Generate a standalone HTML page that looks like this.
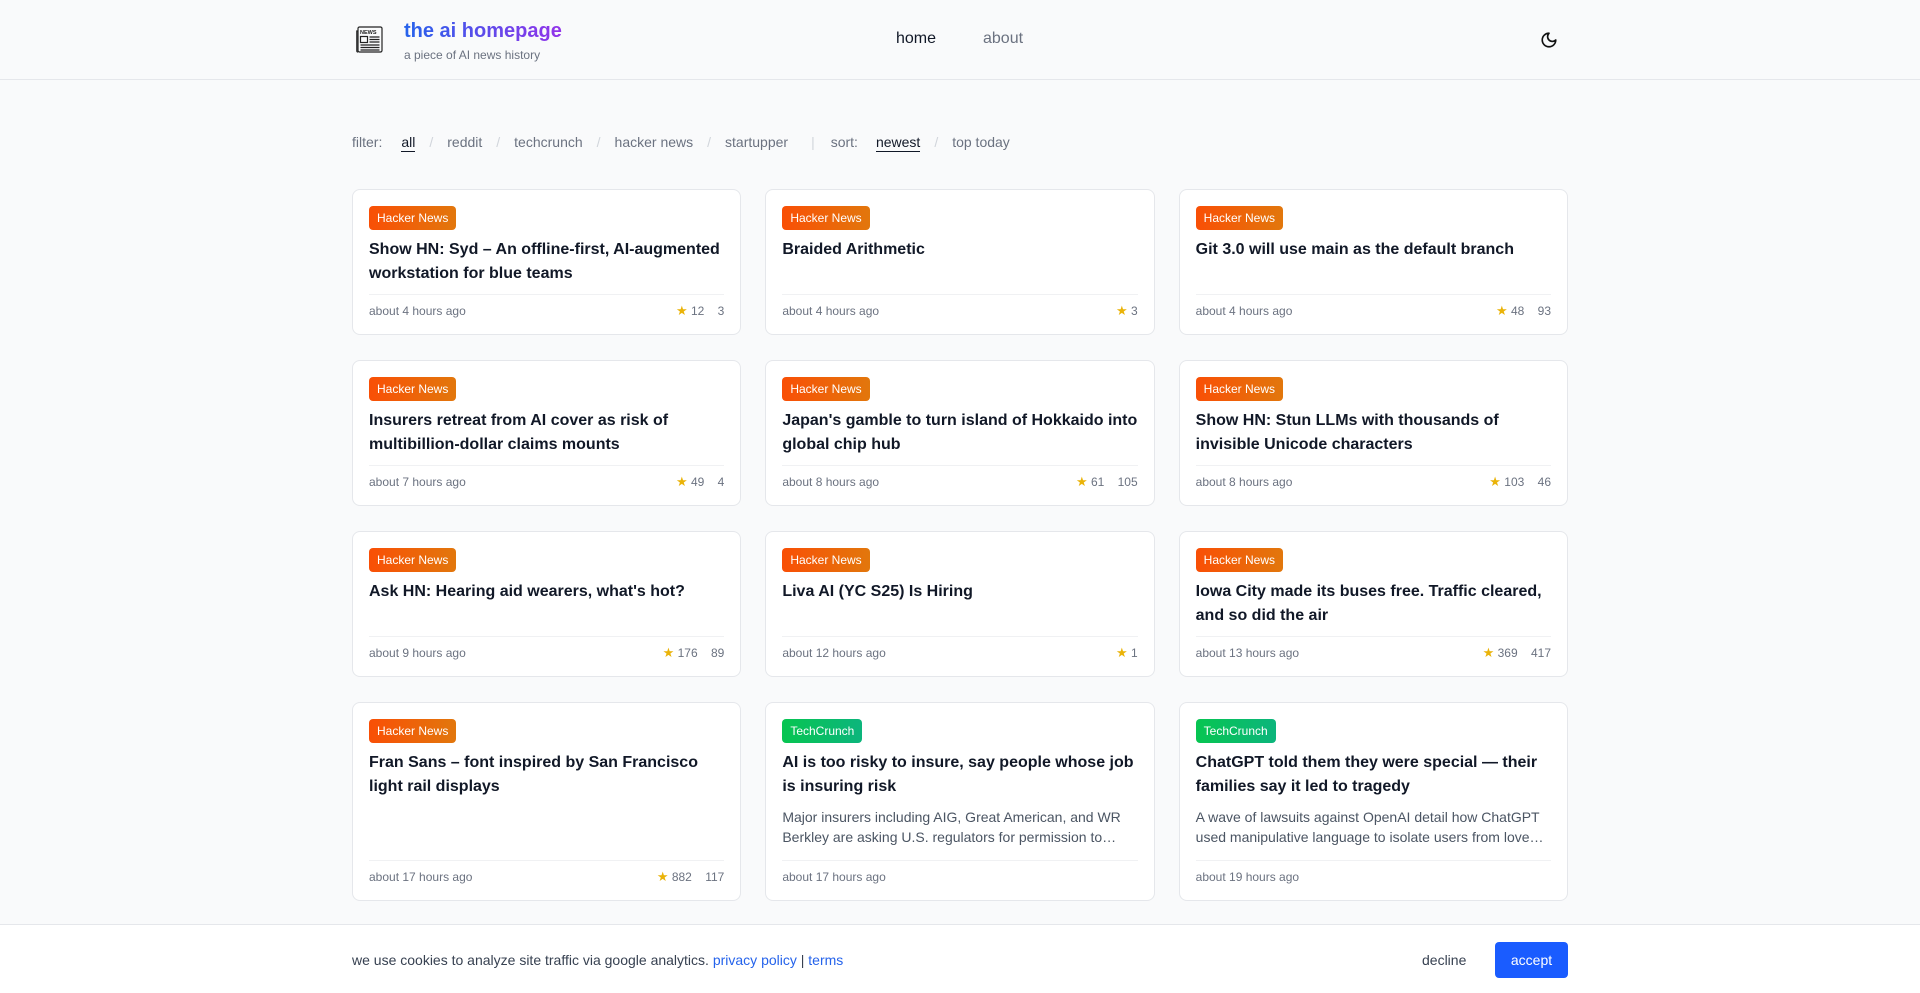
<!DOCTYPE html>
<html><head><meta charset="utf-8"><style>
*{box-sizing:border-box;margin:0;padding:0}
body{width:1920px;height:993px;overflow:hidden;background:#f9fafb;font-family:"Liberation Sans",sans-serif;color:#111827;position:relative}
header{height:80px;border-bottom:1px solid #e5e7eb;position:relative}
.logo{position:absolute;left:356px;top:26px}
.brand{position:absolute;left:404px;top:19px;font-size:20px;font-weight:bold;background:linear-gradient(90deg,#2563eb,#9333ea);-webkit-background-clip:text;background-clip:text;color:transparent;line-height:24px}
.sub{position:absolute;left:404px;top:48px;font-size:12px;color:#6b7280}
.nav{position:absolute;top:30px;font-size:16px}
.moon{position:absolute;left:1540px;top:31px}
.filters{position:absolute;top:134px;left:352px;font-size:14px;color:#6b7280;display:flex;white-space:nowrap}
.sel{color:#111827;border-bottom:1.5px solid #111827;padding-bottom:1px}
.filters .sep{color:#d1d5db;margin:0 14px}
.grid{position:absolute;top:189px;left:352px;width:1216px;display:grid;grid-template-columns:repeat(3,1fr);column-gap:24px;row-gap:25px}
.card{background:#fff;border:1px solid #e5e7eb;border-radius:8px;padding:16px 16px 15px;display:flex;flex-direction:column;min-height:146px}
.badge{align-self:flex-start;font-size:12px;color:#fff;padding:0 8px;height:24px;line-height:24px;border-radius:4px;background:linear-gradient(90deg,#f94f06,#e2770c)}
.tc{background:linear-gradient(90deg,#07c551,#0cb57c)}
.t{font-size:16px;font-weight:bold;line-height:24px;margin-top:8px;min-height:48px}
.d{font-size:14px;line-height:20px;color:#4b5563;margin-top:8px;margin-bottom:5px}
.f{border-top:1px solid #f0f1f3;padding-top:8px;display:flex;justify-content:space-between;font-size:12px;color:#6b7280;line-height:16px;height:25px;margin-top:8px}
.f span{line-height:16px}
.card .sp{flex:1}
.st{color:#eab308;font-size:13px;line-height:16px}
.cookie{position:absolute;top:924px;left:0;width:1920px;height:69px;background:#fff;border-top:1px solid #e5e7eb}
.ct{position:absolute;left:352px;top:27px;font-size:14px;color:#374151}
.ct a{color:#2563eb;text-decoration:none}
.dec{position:absolute;left:1422px;top:27px;font-size:14px;color:#374151}
.acc{position:absolute;left:1495px;top:17px;width:73px;height:36px;background:#1a5cff;border-radius:4px;color:#fff;font-size:14px;text-align:center;line-height:36px}
</style></head><body>
<header>
<svg class="logo" width="27" height="27" viewBox="0 0 27 27" fill="none" stroke="#222" stroke-width="1.2"><rect x="2" y="1" width="24" height="25" rx="1.5"/><path d="M2 5H0.8V25a1 1 0 0 0 1.2 1"/><text x="4" y="8" font-size="5.5" font-weight="bold" fill="#222" stroke="none" font-family="Liberation Sans">NEWS</text><rect x="4.5" y="10.5" width="7" height="6"/><path d="M13.5 11h10M13.5 13.5h10M13.5 16h10M4.5 19h19M4.5 21.5h19M4.5 24h19"/></svg>
<div class="brand">the ai homepage</div>
<div class="sub">a piece of AI news history</div>
<div class="nav" style="left:896px">home</div>
<div class="nav" style="left:983px;color:#6b7280">about</div>
<svg class="moon" width="18" height="18" viewBox="0 0 24 24" fill="none" stroke="#111" stroke-width="2.2" stroke-linecap="round" stroke-linejoin="round"><path d="M12 3a6 6 0 0 0 9 9 9 9 0 1 1-9-9Z"/></svg>
</header>
<div class="filters"><span>filter:</span><span style="margin-left:19px" class="sel">all</span><span class="sep">/</span><span>reddit</span><span class="sep">/</span><span>techcrunch</span><span class="sep">/</span><span>hacker news</span><span class="sep">/</span><span>startupper</span><span class="sep" style="margin:0 16px 0 23px">|</span><span>sort:</span><span style="margin-left:18px" class="sel">newest</span><span class="sep">/</span><span>top today</span></div>
<div class="grid">
<div class="card"><div class="badge">Hacker News</div><div class="t">Show HN: Syd – An offline-first, AI-augmented workstation for blue teams</div><div class="sp"></div><div class="f"><span>about 4 hours ago</span><span><span class="st">★</span> 12 &nbsp;&nbsp; 3</span></div></div>
<div class="card"><div class="badge">Hacker News</div><div class="t">Braided Arithmetic</div><div class="sp"></div><div class="f"><span>about 4 hours ago</span><span><span class="st">★</span> 3</span></div></div>
<div class="card"><div class="badge">Hacker News</div><div class="t">Git 3.0 will use main as the default branch</div><div class="sp"></div><div class="f"><span>about 4 hours ago</span><span><span class="st">★</span> 48 &nbsp;&nbsp; 93</span></div></div>
<div class="card"><div class="badge">Hacker News</div><div class="t">Insurers retreat from AI cover as risk of multibillion-dollar claims mounts</div><div class="sp"></div><div class="f"><span>about 7 hours ago</span><span><span class="st">★</span> 49 &nbsp;&nbsp; 4</span></div></div>
<div class="card"><div class="badge">Hacker News</div><div class="t">Japan's gamble to turn island of Hokkaido into global chip hub</div><div class="sp"></div><div class="f"><span>about 8 hours ago</span><span><span class="st">★</span> 61 &nbsp;&nbsp; 105</span></div></div>
<div class="card"><div class="badge">Hacker News</div><div class="t">Show HN: Stun LLMs with thousands of invisible Unicode characters</div><div class="sp"></div><div class="f"><span>about 8 hours ago</span><span><span class="st">★</span> 103 &nbsp;&nbsp; 46</span></div></div>
<div class="card"><div class="badge">Hacker News</div><div class="t">Ask HN: Hearing aid wearers, what's hot?</div><div class="sp"></div><div class="f"><span>about 9 hours ago</span><span><span class="st">★</span> 176 &nbsp;&nbsp; 89</span></div></div>
<div class="card"><div class="badge">Hacker News</div><div class="t">Liva AI (YC S25) Is Hiring</div><div class="sp"></div><div class="f"><span>about 12 hours ago</span><span><span class="st">★</span> 1</span></div></div>
<div class="card"><div class="badge">Hacker News</div><div class="t">Iowa City made its buses free. Traffic cleared, and so did the air</div><div class="sp"></div><div class="f"><span>about 13 hours ago</span><span><span class="st">★</span> 369 &nbsp;&nbsp; 417</span></div></div>
<div class="card"><div class="badge">Hacker News</div><div class="t">Fran Sans – font inspired by San Francisco light rail displays</div><div class="sp"></div><div class="f"><span>about 17 hours ago</span><span><span class="st">★</span> 882 &nbsp;&nbsp; 117</span></div></div>
<div class="card"><div class="badge tc">TechCrunch</div><div class="t">AI is too risky to insure, say people whose job is insuring risk</div><div class="d">Major insurers including AIG, Great American, and WR Berkley are asking U.S. regulators for permission to…</div><div class="sp"></div><div class="f"><span>about 17 hours ago</span><span></span></div></div>
<div class="card"><div class="badge tc">TechCrunch</div><div class="t">ChatGPT told them they were special — their families say it led to tragedy</div><div class="d">A wave of lawsuits against OpenAI detail how ChatGPT used manipulative language to isolate users from love…</div><div class="sp"></div><div class="f"><span>about 19 hours ago</span><span></span></div></div>
</div>
<div class="cookie"><div class="ct">we use cookies to analyze site traffic via google analytics. <a>privacy policy</a> | <a>terms</a></div><div class="dec">decline</div><div class="acc">accept</div></div>
</body></html>
